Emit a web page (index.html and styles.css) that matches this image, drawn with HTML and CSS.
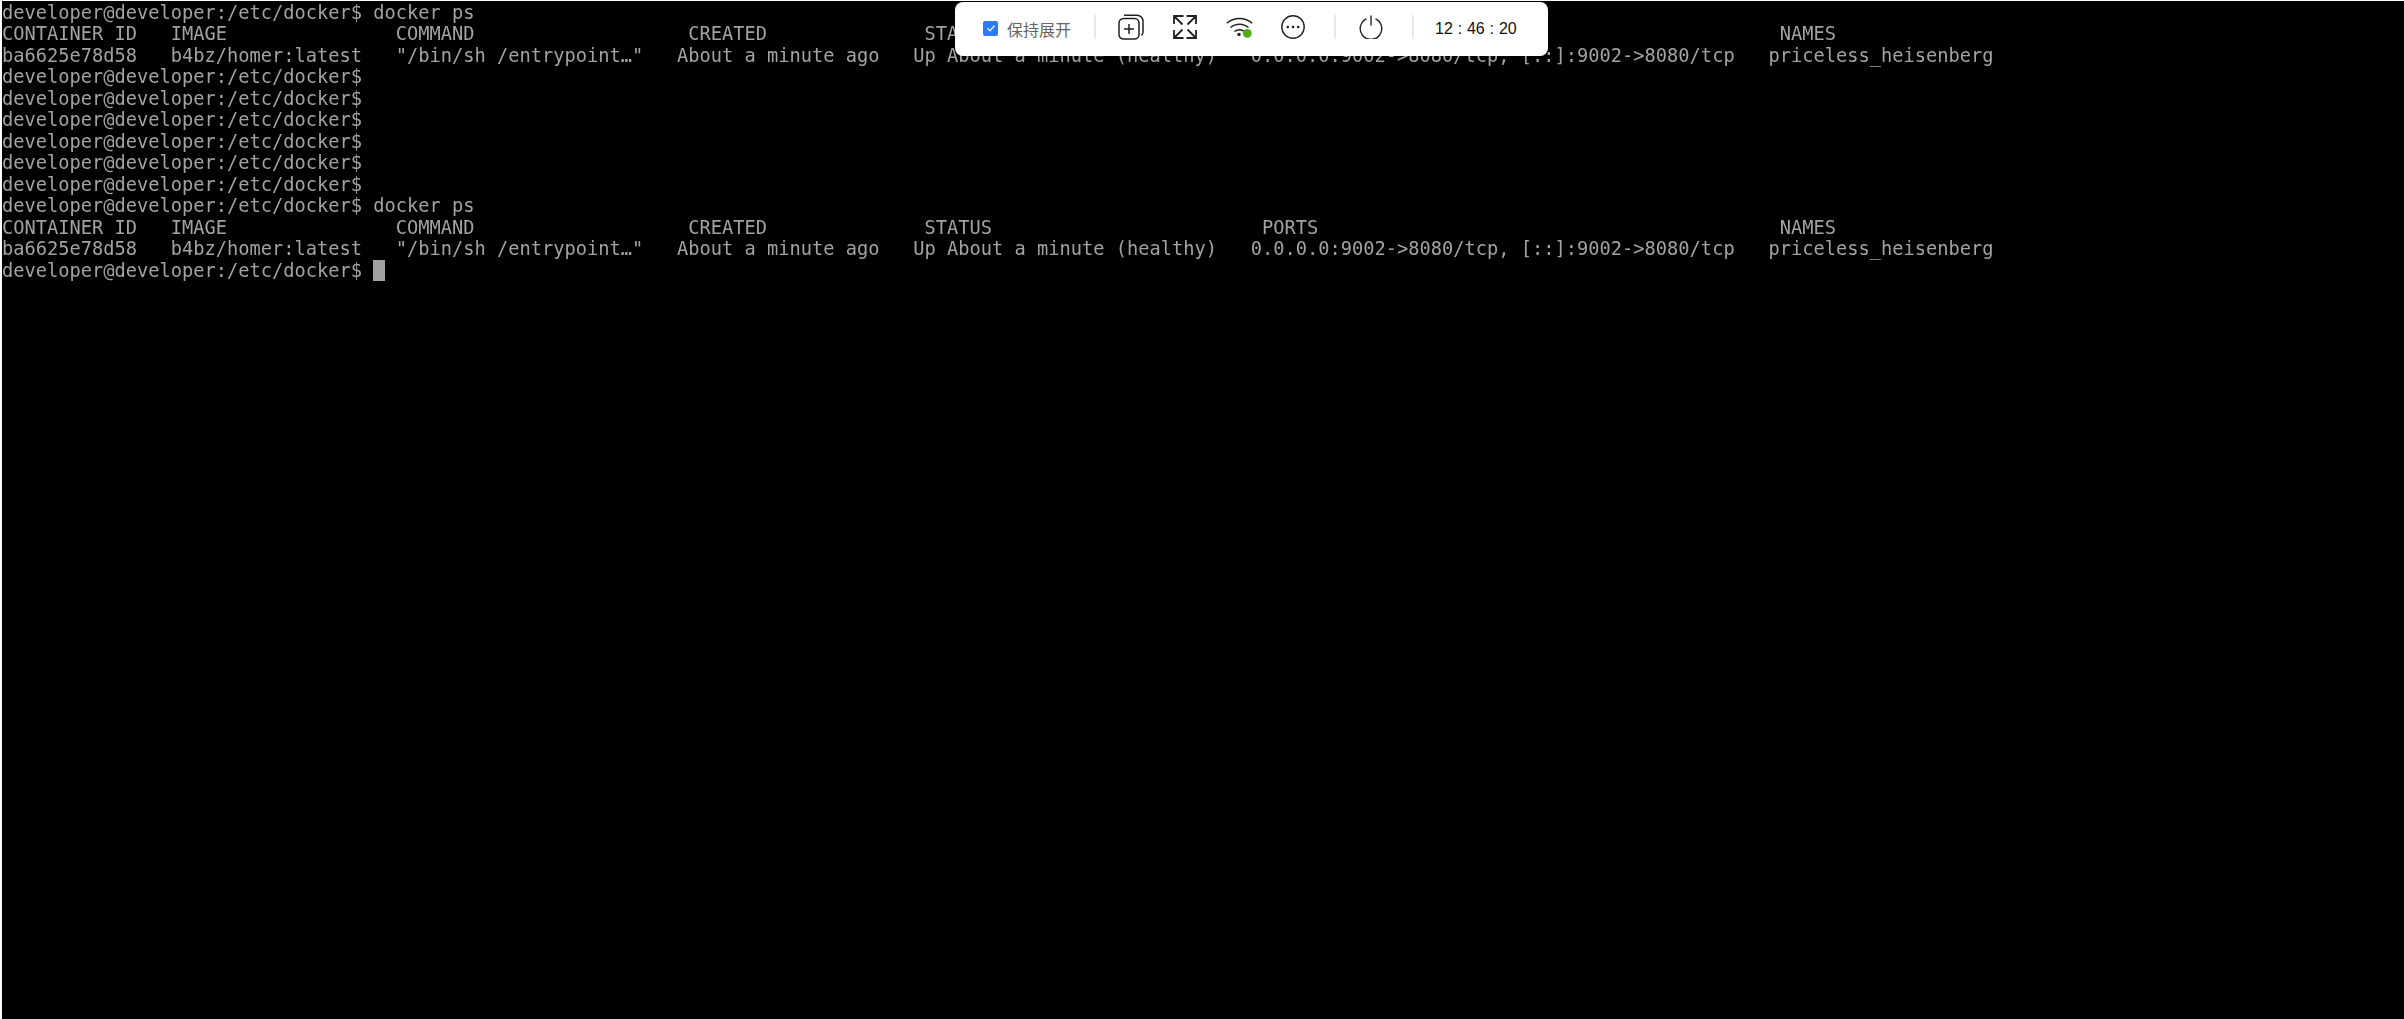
FILE: index.html
```html
<!DOCTYPE html>
<html lang="zh">
<head>
<meta charset="utf-8">
<title>Terminal</title>
<link rel="stylesheet" href="styles.css">
</head>
<body>
<main class="terminal">
<pre class="term-text">developer@developer:/etc/docker$ docker ps
CONTAINER ID   IMAGE               COMMAND                   CREATED              STATUS                        PORTS                                         NAMES
ba6625e78d58   b4bz/homer:latest   "/bin/sh /entrypoint…"   About a minute ago   Up About a minute (healthy)   0.0.0.0:9002->8080/tcp, [::]:9002->8080/tcp   priceless_heisenberg
developer@developer:/etc/docker$
developer@developer:/etc/docker$
developer@developer:/etc/docker$
developer@developer:/etc/docker$
developer@developer:/etc/docker$
developer@developer:/etc/docker$
developer@developer:/etc/docker$ docker ps
CONTAINER ID   IMAGE               COMMAND                   CREATED              STATUS                        PORTS                                         NAMES
ba6625e78d58   b4bz/homer:latest   "/bin/sh /entrypoint…"   About a minute ago   Up About a minute (healthy)   0.0.0.0:9002->8080/tcp, [::]:9002->8080/tcp   priceless_heisenberg
developer@developer:/etc/docker$ <span class="cursor"> </span></pre>
</main>
<div class="toolbar">
  <label class="keep"><span class="check"><svg viewBox="0 0 14 14" width="14" height="14"><path d="M3.5 7.2 6 9.7 10.600 4.600" fill="none" stroke="#dfeaff" stroke-width="1.500"/></svg></span><span class="keep-label">保持展开</span></label>
  <span class="divider"></span>
  <div class="icons">
    <svg class="icon" viewBox="0 0 26 26" width="26" height="26" fill="none" stroke="#222" stroke-width="1.500"><rect x="1" y="4.500" width="20" height="20.500" rx="4.500"/><path d="M6 1.200H19c3.400 0 6 2.600 6 6V18c0 1.500-.5 2.500-1.500 3.500"/><path d="M11 10v10M6 15h10"/></svg>
    <svg class="icon" viewBox="0 0 24 24" width="24" height="24" fill="none" stroke="#222" stroke-width="1.800"><path d="M1 9V1h9.500M1 1l8.500 8.500M13.500 1H23v8M23 1l-8.500 8.500M1 15v8h9.500M1 23l8.500-8.500M23 15v8h-9.500M23 23l-8.500-8.500"/></svg>
    <svg class="icon wifi" viewBox="0 0 27 22" width="27" height="22" fill="none" stroke="#222" stroke-width="1.500"><path d="M.8 7.200C8 .8 19 .8 26.200 7.200M4.500 11.500c5-4.500 13-4.500 18 0M8.500 15.500c2.800-2.400 7.200-2.400 10 0"/><circle cx="13" cy="18.500" r="1.700" fill="#222" stroke="none"/><circle cx="21.300" cy="17.300" r="4.400" fill="#52ad14" stroke="none"/></svg>
    <svg class="icon" viewBox="0 0 24 24" width="24" height="24" fill="none" stroke="#222" stroke-width="1.400"><circle cx="12" cy="12" r="11.200"/><circle cx="6.800" cy="12" r="1.300" fill="#222" stroke="none"/><circle cx="12" cy="12" r="1.300" fill="#222" stroke="none"/><circle cx="17.200" cy="12" r="1.300" fill="#222" stroke="none"/></svg>
  </div>
  <span class="divider"></span>
  <svg class="icon power" viewBox="0 0 24 24" width="24" height="24" fill="none" stroke="#222" stroke-width="1.400"><path d="M7.500 3.800a10.800 10.800 0 1 0 9 0M12 .5v10"/></svg>
  <span class="divider"></span>
  <span class="clock">12 : 46 : 20</span>
</div>
</body>
</html>
```
FILE: styles.css
```css
* { box-sizing: border-box; }
html, body { margin: 0; height: 100%; background: #fff; overflow: hidden; }
body { padding: 1px 0 0 2px; }
.terminal { height: 100%; background: #000; overflow: hidden; padding-top: 1px; }
.term-text {
  margin: 0;
  font-family: "DejaVu Sans Mono", monospace;
  font-size: 18.69px;
  line-height: 21.47px;
  color: #a2a2a2;
  white-space: pre;
  filter: blur(0.4px);
}
.cursor { background: #a2a2a2; }
.toolbar {
  position: absolute;
  left: 955px;
  top: 2px;
  width: 593px;
  height: 54px;
  display: flex;
  align-items: center;
  background: #fff;
  border-radius: 8px;
  padding-left: 28px;
}
.keep { display: flex; align-items: center; gap: 9px; }
.check {
  width: 15px;
  height: 15px;
  border-radius: 2px;
  background: #2a7df0;
  display: flex;
  align-items: center;
  justify-content: center;
  margin-bottom: 2px;
}
.keep-label {
  font-family: "Noto Sans CJK SC", sans-serif;
  font-size: 16px;
  color: #666;
}
.divider { width: 2px; height: 24px; background: #e8e8e8; flex: none; margin-bottom: 4px; }
.keep + .divider { margin-left: 23px; }
.icons { display: flex; align-items: center; gap: 29px; margin: 0 29px 4px 22px; }
.icon { display: block; flex: none; }
.wifi { margin-right: -1px; }
.power { margin: 0 29px 4px 23px; }
.clock {
  margin-left: 21px;
  font-family: "Liberation Sans", sans-serif;
  font-size: 16px;
  word-spacing: 0.4px;
  color: #111;
  white-space: pre;
}
```
